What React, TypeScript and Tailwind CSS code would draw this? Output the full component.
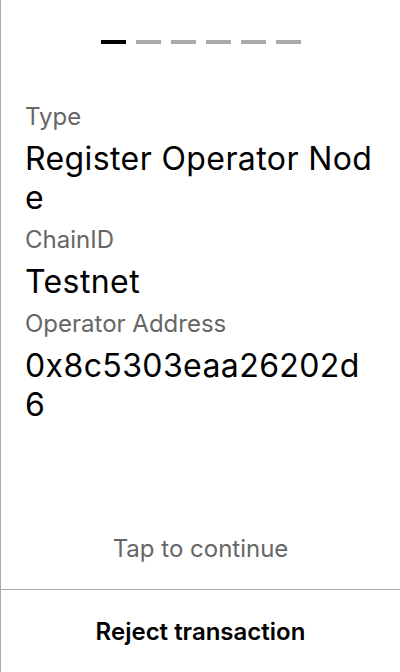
import React from 'react';

const fields = [
  { label: 'Type', value: 'Register Operator Node' },
  { label: 'ChainID', value: 'Testnet' },
  { label: 'Operator Address', value: '0x8c5303eaa26202d6' },
];

const App: React.FC = () => {
  const steps = 6;
  const current = 0;
  return (
    <div
      className="h-screen w-full flex flex-col bg-white border-l border-[#aaaaaa] text-black"
      style={{ fontFamily: 'Inter, "Noto Sans", sans-serif' }}
    >
      <div className="flex-1 flex flex-col">
        <div className="pt-10 flex justify-center gap-[10px]">
          {Array.from({ length: steps }).map((_, i) => (
            <div key={i} className={i === current ? 'w-[25px] h-1 bg-black' : 'w-[25px] h-1 bg-[#aaaaaa]'} />
          ))}
        </div>

        <div className="px-6 pt-[58px] flex flex-col gap-2">
          {fields.map(f => (
            <React.Fragment key={f.label}>
              <span className="text-[24px] leading-[29px] text-[#666666]">{f.label}</span>
              <span className="text-[32px] leading-[39px] tracking-[0.4px] break-all">{f.value}</span>
            </React.Fragment>
          ))}
        </div>

        <div className="mt-auto pb-[26px] text-center text-[24px] leading-[29px] text-[#666666]">
          Tap to continue
        </div>
      </div>

      <button className="h-[83px] border-t border-[#aaaaaa] flex items-center justify-center text-[24px] leading-[29px] font-semibold">
        Reject transaction
      </button>
    </div>
  );
};

export default App;
